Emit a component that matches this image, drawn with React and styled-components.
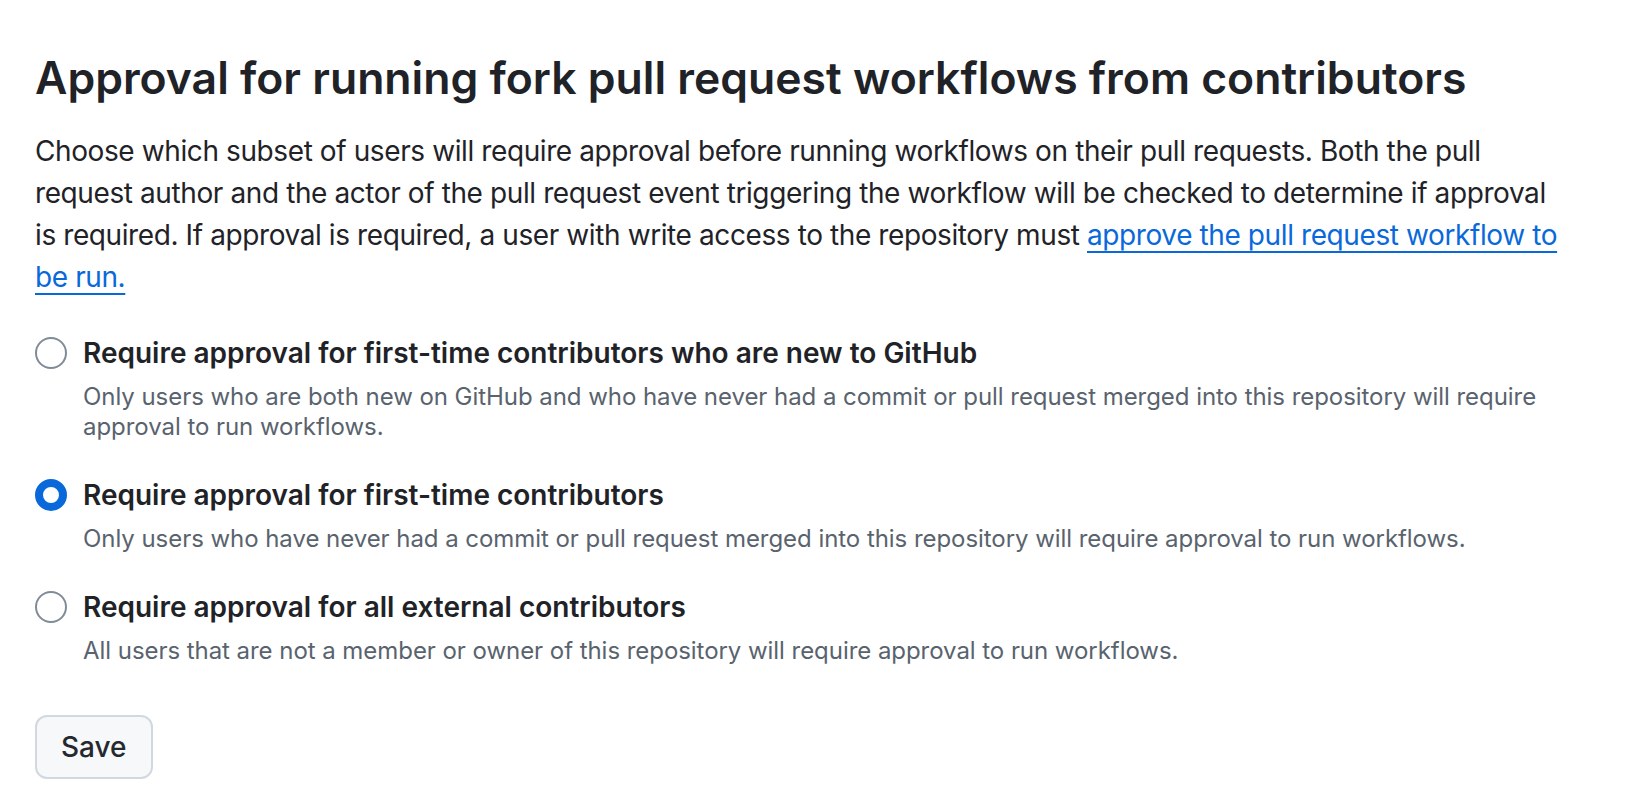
import React, { useState } from "react";
import styled, { createGlobalStyle } from "styled-components";

const GlobalStyle = createGlobalStyle`
  * { box-sizing: border-box; }
  body {
    margin: 0;
    background: #ffffff;
    color: #1f2328;
    font-family: Inter, "Noto Sans", "Liberation Sans", sans-serif;
  }
`;

const Page = styled.div`
  display: flex;
  flex-direction: column;
  align-items: flex-start;
  padding: 51px 58px 32px 35px;
`;

const Heading = styled.h2`
  margin: 0 0 24px;
  font-size: 44.5px;
  line-height: 55px;
  font-weight: 600;
  color: #1f2328;
`;

const Intro = styled.p`
  margin: 0 0 34px;
  font-size: 28px;
  line-height: 42px;
  letter-spacing: -0.4px;
  color: #1f2328;
`;

const DocLink = styled.a`
  color: #0969da;
  text-decoration: underline;
  text-decoration-thickness: 2px;
  text-underline-offset: 6px;
`;

const Options = styled.div`
  display: flex;
  flex-direction: column;
  gap: 32px;
  margin-bottom: 49px;
`;

const Option = styled.label`
  display: grid;
  grid-template-columns: 32px 1fr;
  column-gap: 16px;
  row-gap: 8px;
  cursor: pointer;
`;

const Radio = styled.span`
  width: 32px;
  height: 32px;
  margin-top: 5px;
  border-radius: 50%;
  background: #ffffff;
  border: ${(p) => (p.$checked ? "8px solid #0969da" : "2px solid #818b98")};
`;

const OptionTitle = styled.span`
  font-size: 28px;
  line-height: 42px;
  font-weight: 600;
`;

const OptionNote = styled.span`
  grid-column: 2;
  font-size: 24px;
  line-height: 30px;
  letter-spacing: -0.05px;
  color: #59636e;
`;

const Button = styled.button`
  height: 64px;
  padding: 0 24px;
  border: 2px solid #d1d9e0;
  border-radius: 12px;
  background: #f6f8fa;
  color: #25292e;
  font-family: inherit;
  font-size: 28px;
  font-weight: 500;
  cursor: pointer;
`;

const options = [
  {
    id: "new",
    title: "Require approval for first-time contributors who are new to GitHub",
    note: "Only users who are both new on GitHub and who have never had a commit or pull request merged into this repository will require approval to run workflows.",
  },
  {
    id: "first",
    title: "Require approval for first-time contributors",
    note: "Only users who have never had a commit or pull request merged into this repository will require approval to run workflows.",
  },
  {
    id: "all",
    title: "Require approval for all external contributors",
    note: "All users that are not a member or owner of this repository will require approval to run workflows.",
  },
];

export default function App() {
  const [selected, setSelected] = useState("first");

  return (
    <>
      <GlobalStyle />
      <Page>
        <Heading>Approval for running fork pull request workflows from contributors</Heading>
        <Intro>
          Choose which subset of users will require approval before running workflows on
          their pull requests. Both the pull request author and the actor of the pull request
          event triggering the workflow will be checked to determine if approval is required.
          If approval is required, a user with write access to the repository must{" "}
          <DocLink href="#">approve the pull request workflow to be run.</DocLink>
        </Intro>
        <Options>
          {options.map((o) => (
            <Option key={o.id} onClick={() => setSelected(o.id)}>
              <Radio $checked={selected === o.id} />
              <OptionTitle>{o.title}</OptionTitle>
              <OptionNote>{o.note}</OptionNote>
            </Option>
          ))}
        </Options>
        <Button>Save</Button>
      </Page>
    </>
  );
}
